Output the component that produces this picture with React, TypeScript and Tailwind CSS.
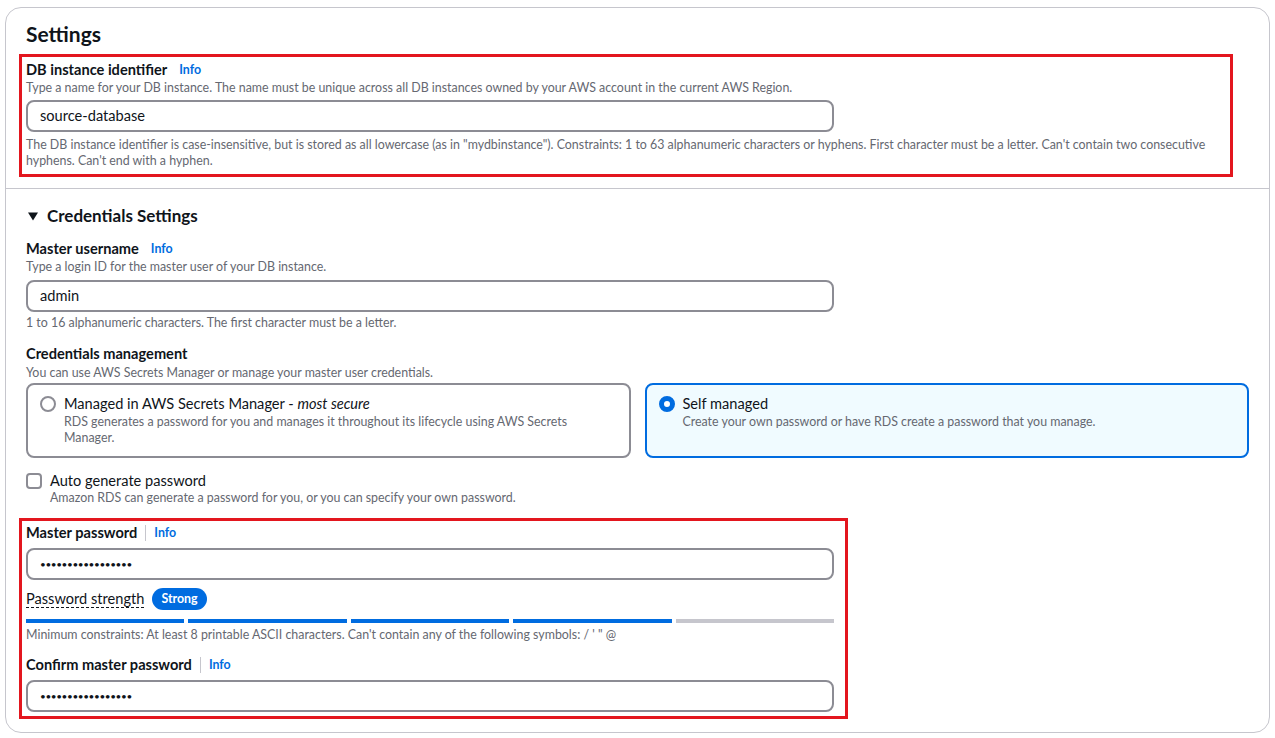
import { useState } from "react";

const FONT = { fontFamily: "Lato, 'Open Sans', Arial, sans-serif" };

const InfoLink = () => (
  <span className="block text-[12.4px] font-bold leading-[18px] text-[#006ce0]">Info</span>
);

const FieldLabel = ({ text, divider = false }: { text: string; divider?: boolean }) => (
  <div className="flex h-[18px] items-center">
    <span className="text-[14.6px] font-bold leading-[18px] text-[#0f141a]">{text}</span>
    {divider ? (
      <>
        <span className="mx-[8px] h-[16px] w-px bg-[#c6c6cd]" />
        <InfoLink />
      </>
    ) : (
      <div className="ml-[12px]">
        <InfoLink />
      </div>
    )}
  </div>
);

const TextInput = ({ value, password = false }: { value: string; password?: boolean }) => (
  <div className="flex h-[32px] w-[808px] items-center rounded-[8px] border-2 border-[#8c8c94] bg-white px-[12px]">
    {password ? (
      <span className="text-[10px] leading-none tracking-[-0.4px] text-[#0f141a]">{"•".repeat(17)}</span>
    ) : (
      <span className="text-[14.6px] leading-[18px] text-[#0f141a]">{value}</span>
    )}
  </div>
);

const Hint = ({ children, className = "" }: { children: React.ReactNode; className?: string }) => (
  <p className={`text-[12.4px] leading-[16px] text-[#656871] ${className}`}>{children}</p>
);

const App = () => {
  const [mode, setMode] = useState("self");
  const strength = [true, true, true, true, false];

  return (
    <div className="min-h-screen bg-white px-[5px] pt-[7px]" style={FONT}>
      <div className="w-[1265px] rounded-[16px] border border-[#c6c6cd] bg-white">
        {/* Settings */}
        <div className="px-[20px] pb-[11px] pt-[14px]">
          <h2 className="text-[21px] font-bold leading-[24px] text-[#0f141a]">Settings</h2>
          <div className="-ml-[7px] mt-[8px] w-[1214px] border-[3px] border-[#e3161e] pb-[5px] pl-[4px] pr-[8px] pt-[4px]">
            <FieldLabel text="DB instance identifier" />
            <Hint className="mt-[1px]">
              Type a name for your DB instance. The name must be unique across all DB instances owned by your AWS account in the current AWS Region.
            </Hint>
            <div className="mt-[4px]">
              <TextInput value="source-database" />
            </div>
            <Hint className="mt-[5px]">
              The DB instance identifier is case-insensitive, but is stored as all lowercase (as in "mydbinstance"). Constraints: 1 to 63 alphanumeric characters or hyphens. First character must be a letter. Can't contain two consecutive hyphens. Can't end with a hyphen.
            </Hint>
          </div>
        </div>

        <div className="border-t border-[#c6c6cd]" />

        {/* Credentials */}
        <div className="px-[20px] pb-[13px] pt-[17px]">
          <div className="flex items-center gap-[9px] pl-[2px]">
            <svg width="10" height="9" viewBox="0 0 10 9">
              <path d="M0 0.5 H10 L5 8.5 Z" fill="#0f141a" />
            </svg>
            <h3 className="text-[17px] font-bold leading-[20px] text-[#0f141a]">Credentials Settings</h3>
          </div>

          <div className="mt-[14px]">
            <FieldLabel text="Master username" />
            <Hint className="mt-[1px]">Type a login ID for the master user of your DB instance.</Hint>
            <div className="mt-[5px]">
              <TextInput value="admin" />
            </div>
            <Hint className="mt-[3px]">1 to 16 alphanumeric characters. The first character must be a letter.</Hint>
          </div>

          <div className="mt-[14px]">
            <div className="text-[14.6px] font-bold leading-[18px] text-[#0f141a]">Credentials management</div>
            <Hint className="mt-[2px]">You can use AWS Secrets Manager or manage your master user credentials.</Hint>
            <div className="mt-[2px] grid w-[1223px] grid-cols-2 gap-[14px]">
              <button
                onClick={() => setMode("managed")}
                className={`flex items-start gap-[8px] rounded-[8px] border-2 px-[12px] pb-[10px] pt-[10px] text-left ${
                  mode === "managed" ? "border-[#006ce0] bg-[#f0fbff]" : "border-[#8c8c94] bg-white"
                }`}
              >
                <span
                  className={`mt-[1px] h-[16px] w-[16px] shrink-0 rounded-full bg-white ${
                    mode === "managed" ? "border-[5px] border-[#006ce0]" : "border-2 border-[#8c8c94]"
                  }`}
                />
                <span>
                  <span className="block text-[14.6px] leading-[18px] text-[#0f141a]">
                    Managed in AWS Secrets Manager - <i>most secure</i>
                  </span>
                  <span className="mt-[1px] block pr-[40px] text-[12.4px] leading-[16px] text-[#656871]">
                    RDS generates a password for you and manages it throughout its lifecycle using AWS Secrets Manager.
                  </span>
                </span>
              </button>
              <button
                onClick={() => setMode("self")}
                className={`flex items-start gap-[8px] rounded-[8px] border-2 px-[12px] pb-[10px] pt-[10px] text-left ${
                  mode === "self" ? "border-[#006ce0] bg-[#f0fbff]" : "border-[#8c8c94] bg-white"
                }`}
              >
                <span
                  className={`mt-[1px] h-[16px] w-[16px] shrink-0 rounded-full bg-white ${
                    mode === "self" ? "border-[5px] border-[#006ce0]" : "border-2 border-[#8c8c94]"
                  }`}
                />
                <span>
                  <span className="block text-[14.6px] leading-[18px] text-[#0f141a]">Self managed</span>
                  <span className="mt-[1px] block text-[12.4px] leading-[16px] text-[#656871]">
                    Create your own password or have RDS create a password that you manage.
                  </span>
                </span>
              </button>
            </div>
          </div>

          <div className="mt-[14px] flex items-start gap-[8px]">
            <span className="mt-[1px] h-[16px] w-[16px] shrink-0 rounded-[4px] border-2 border-[#8c8c94] bg-white" />
            <div>
              <div className="text-[14.6px] leading-[18px] text-[#0f141a]">Auto generate password</div>
              <Hint>Amazon RDS can generate a password for you, or you can specify your own password.</Hint>
            </div>
          </div>

          <div className="-ml-[7px] mt-[12px] w-[829px] border-[3px] border-[#e3161e] pb-[4px] pl-[4px] pt-[3px]">
            <FieldLabel text="Master password" divider />
            <div className="mt-[6px]">
              <TextInput value="" password />
            </div>
            <div className="mt-[8px] flex items-center gap-[8px]">
              <span className="border-b border-dashed border-[#0f141a] text-[14.6px] leading-[17px] text-[#0f141a]">
                Password strength
              </span>
              <span className="flex h-[22px] items-center rounded-full bg-[#006ce0] px-[9px] text-[12.4px] font-bold text-white">
                Strong
              </span>
            </div>
            <div className="mt-[9px] flex w-[808px] gap-[4px]">
              {strength.map((on, i) => (
                <div key={i} className={`h-[4px] flex-1 ${on ? "bg-[#006ce0]" : "bg-[#c6c6cd]"}`} />
              ))}
            </div>
            <Hint className="mt-[4px]">
              Minimum constraints: At least 8 printable ASCII characters. Can't contain any of the following symbols: / ' " @
            </Hint>
            <div className="mt-[13px]">
              <FieldLabel text="Confirm master password" divider />
            </div>
            <div className="mt-[6px]">
              <TextInput value="" password />
            </div>
          </div>
        </div>
      </div>
    </div>
  );
};

export default App;
